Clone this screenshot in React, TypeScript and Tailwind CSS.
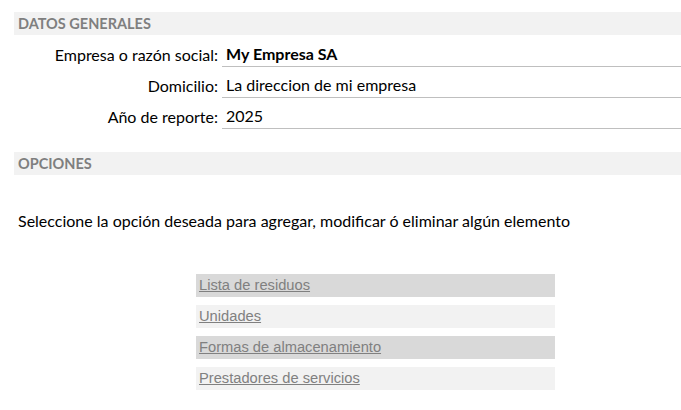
const rows = [
  { label: "Empresa o razón social:", value: "My Empresa SA", bold: true },
  { label: "Domicilio:", value: "La direccion de mi empresa", bold: false },
  { label: "Año de reporte:", value: "2025", bold: false },
];

const options = [
  { name: "Lista de residuos", dark: true },
  { name: "Unidades", dark: false },
  { name: "Formas de almacenamiento", dark: true },
  { name: "Prestadores de servicios", dark: false },
];

function SectionBar({ title }: { title: string }) {
  return (
    <div className="ml-[14px] flex h-[23px] items-center bg-[#f2f2f2] pl-[4px] text-[14.5px] font-bold leading-[20px] text-[#7f7f7f]">
      {title}
    </div>
  );
}

export default function App() {
  return (
    <div className="h-[410px] w-[681px] overflow-hidden bg-white pt-[12px] font-['Lato',sans-serif] text-black">
      <SectionBar title="DATOS GENERALES" />

      <div className="mt-[1px] flex flex-col">
        {rows.map((r) => (
          <div key={r.label} className="flex h-[31px] items-end">
            <div className="w-[218px] pb-[1px] text-right text-[16px] leading-[22px]">{r.label}</div>
            <div
              className={`ml-[4px] flex-1 border-b border-[#bfbfbf] pb-[1px] pl-[4px] text-[16px] leading-[22px] ${
                r.bold ? "font-bold" : ""
              }`}
            >
              {r.value}
            </div>
          </div>
        ))}
      </div>

      <div className="mt-[23px]">
        <SectionBar title="OPCIONES" />
      </div>

      <p className="mt-[35px] pl-[18px] text-[16px] leading-[22px]">
        Seleccione la opción deseada para agregar, modificar ó eliminar algún elemento
      </p>

      <div className="mt-[42px] ml-[196px] flex w-[359px] flex-col gap-[8px]">
        {options.map((o) => (
          <div
            key={o.name}
            className={`flex h-[23px] items-center pl-[3px] font-['Liberation_Sans',Arial,sans-serif] text-[14.7px] ${
              o.dark ? "bg-[#d9d9d9]" : "bg-[#f2f2f2]"
            }`}
          >
            <a href="#" className="text-[#808080] underline">
              {o.name}
            </a>
          </div>
        ))}
      </div>
    </div>
  );
}
